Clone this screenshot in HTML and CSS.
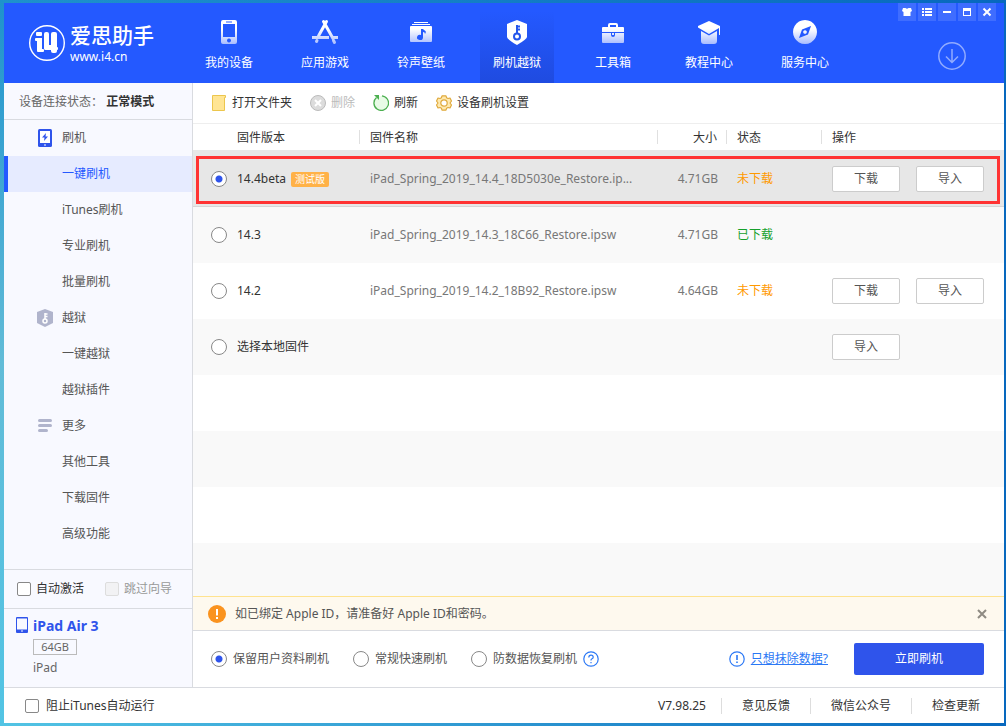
FILE: index.html
```
<!DOCTYPE html>
<html lang="zh-CN">
<head>
    <meta charset="UTF-8">
    <title>爱思助手</title>
    <link rel="stylesheet" href="styles.css">
</head>
<body>
<div class="window">
    <header class="header">
        <a class="logo" href="#">
            <svg class="logo-mark" width="38" height="38" viewBox="0 0 38 38">
                <circle cx="19" cy="19" r="17.3" fill="none" stroke="#fff" stroke-width="1.4"/>
                <g fill="#fff">
                    <rect x="8" y="8" width="6" height="4" rx="1"/>
                    <rect x="7" y="14" width="7" height="3" rx="1"/>
                    <rect x="9" y="14" width="5" height="13"/>
                    <rect x="9" y="25" width="7" height="3" rx="1"/>
                    <rect x="16" y="8" width="5" height="18" rx="2"/>
                    <rect x="16" y="21" width="9" height="5" rx="2"/>
                    <rect x="23" y="8" width="6" height="21" rx="2"/>
                    <rect x="23" y="23" width="7" height="3" rx="1"/>
                </g>
            </svg>
            <span class="logo-text"><strong>爱思助手</strong><small>www.i4.cn</small></span>
        </a>
        <nav class="topnav">
            <a href="#">
                <svg width="26" height="26" viewBox="0 0 26 26"><path fill="url(#fade)" fill-rule="evenodd" d="M7 1h12q2 0 2 2v20q0 2-2 2H7q-2 0-2-2V3q0-2 2-2zm0 4v13h12V5zm3-2.500v1h6v-1zm3 17a2 2 0 1 0 .01 0z"/></svg>
                我的设备
            </a>
            <a href="#">
                <svg width="26" height="26" viewBox="0 0 26 26" fill="none" stroke="url(#fade)" stroke-linecap="round"><path stroke-width="3" d="M11.500 2.500l9.500 17M14.500 2.500L6.500 17M5 21.500l-.5 1M21.500 21.500l1 2"/><path stroke-width="3" stroke-linecap="butt" d="M0 18.500h17M20 18.500h6"/></svg>
                应用游戏
            </a>
            <a href="#">
                <svg width="26" height="26" viewBox="0 0 26 26"><path fill="url(#fade)" fill-rule="evenodd" d="M6 3h14v1H6zM4 5h18v1H4zM3 7h20q1 0 1 1v14q0 1-1 1H3q-1 0-1-1V8q0-1 1-1zm10 3v6a3 2.600 0 1 0 2 2.500V13q2 0 2 2 2-3-1-4l-1-1z"/></svg>
                铃声壁纸
            </a>
            <a class="active" href="#">
                <svg width="26" height="26" viewBox="0 0 26 26"><path fill="#fff" d="M13 1l10 4v13q0 2-10 8Q3 20 3 18V5z"/><path fill="none" stroke="#2456ec" stroke-width="2" d="M13 6v9M13 7.500h3M13 10.500h3"/><circle cx="13" cy="17.500" r="3" fill="none" stroke="#2456ec" stroke-width="2"/></svg>
                刷机越狱
            </a>
            <a href="#">
                <svg width="26" height="26" viewBox="0 0 26 26"><path fill="url(#fade)" fill-rule="evenodd" d="M8 8V6q0-2 2-2h6q2 0 2 2v2h5q1 0 1 1v4H2V9q0-1 1-1zm2 0h6V6h-6zM2 14h9v2q0 2 2 2t2-2v-2h9v9q0 1-1 1H3q-1 0-1-1zm10 0h2v2h-2z"/></svg>
                工具箱
            </a>
            <a href="#">
                <svg width="26" height="26" viewBox="0 0 26 26"><path fill="url(#fade)" d="M13 2l11 5v9h-1V9l-10 6L2 8.500V7zM5 12l8 4.500 8-4.500v10q0 3-3 3H8q-3 0-3-3z"/></svg>
                教程中心
            </a>
            <a href="#">
                <svg width="26" height="26" viewBox="0 0 26 26"><path fill="url(#fade)" fill-rule="evenodd" d="M13 1a12 12 0 1 0 .01 0zM19 7l-3 8.500L7 19l3-8.500zm-6 4.200a1.800 1.800 0 1 0 .01 0z"/></svg>
                服务中心
            </a>
        </nav>
        <div class="controls">
            <button type="button" aria-label="皮肤"><svg width="18" height="18" viewBox="0 0 18 18"><path fill="#fff" d="M5 5h2.500q1.500 1.500 3 0H13l1 3-1.500 1v4h-7V9L4 8z"/></svg></button>
            <button type="button" aria-label="菜单"><svg width="18" height="18" viewBox="0 0 18 18"><path stroke="#fff" stroke-width="2" d="M4 6h2M7 6h7M4 9h2M7 9h7M4 12h2M7 12h7"/></svg></button>
            <button type="button" aria-label="最小化"><svg width="18" height="18" viewBox="0 0 18 18"><path stroke="#fff" stroke-width="2" d="M5 9h8"/></svg></button>
            <button type="button" aria-label="最大化"><svg width="18" height="18" viewBox="0 0 18 18"><path fill="#fff" fill-rule="evenodd" d="M5 5h8v8H5zm1 3v4h6V8z"/></svg></button>
            <button type="button" aria-label="关闭"><svg width="18" height="18" viewBox="0 0 18 18"><path stroke="#fff" stroke-width="2" d="M5.500 5.500l7 7M12.500 5.500l-7 7"/></svg></button>
        </div>
        <button class="downloads" type="button" aria-label="下载"><svg width="28" height="28" viewBox="0 0 28 28" fill="none" stroke="#91abff" stroke-width="1.500"><circle cx="14" cy="14" r="13.200"/><path d="M14 7v13M8 14.500l6 6 6-6"/></svg></button>
    </header>

    <div class="body">
        <aside class="sidebar">
            <p class="status">设备连接状态： <b>正常模式</b></p>
            <nav class="menu">
                <a class="group" href="#"><svg width="16" height="18" viewBox="0 0 16 18"><rect x="1" width="14" height="18" rx="1.500" fill="#2f54eb"/><path fill="#fff" d="M3 2h10v12H3zM7 15.500h2v1H7z"/><path fill="#2f54eb" d="M9 4L5 8.500h2.500L7 12l4-4.500H8.500z"/></svg>刷机</a>
                <a class="current" href="#">一键刷机</a>
                <a href="#">iTunes刷机</a>
                <a href="#">专业刷机</a>
                <a href="#">批量刷机</a>
                <a class="group" href="#"><svg width="16" height="18" viewBox="0 0 16 18"><path fill="#b0b4cc" d="M8 0l8 3v11l-8 4-8-4V3z"/><path fill="none" stroke="#fff" stroke-width="1.500" d="M8 4v6M8 5h2.500M8 7.500h2.500"/><circle cx="8" cy="12" r="2" fill="none" stroke="#fff" stroke-width="1.500"/></svg>越狱</a>
                <a href="#">一键越狱</a>
                <a href="#">越狱插件</a>
                <a class="group" href="#"><svg width="16" height="18" viewBox="0 0 16 18"><path stroke="#b0b4cc" stroke-width="3" stroke-linecap="round" d="M2.500 3.500h11M2.500 8.500h11M2.500 13.500h7"/></svg>更多</a>
                <a href="#">其他工具</a>
                <a href="#">下载固件</a>
                <a href="#">高级功能</a>
            </nav>
            <div class="activate">
                <label><input type="checkbox">自动激活</label>
                <label class="off"><input type="checkbox" disabled>跳过向导</label>
            </div>
            <div class="device">
                <svg width="12" height="16" viewBox="0 0 12 16"><path fill="#2f54eb" fill-rule="evenodd" d="M1 0h10q1 0 1 1v14q0 1-1 1H1q-1 0-1-1V1q0-1 1-1zm0 1.500v11h10v-11zM5 13.500v1h2v-1z"/></svg>
                <div class="device-info">
                    <h2>iPad Air 3</h2>
                    <span class="capacity">64GB</span>
                    <p>iPad</p>
                </div>
            </div>
        </aside>

        <main class="main">
            <div class="toolbar">
                <button type="button"><svg width="16" height="16" viewBox="0 0 16 16"><path fill="#ffe594" stroke="#ecc64d" d="M1.500.5h13v2h-1v13h-12z"/></svg>打开文件夹</button>
                <button type="button" disabled><svg width="16" height="16" viewBox="0 0 16 16"><circle cx="8" cy="8" r="7.500" fill="#dcdcdc" stroke="#bbb"/><path stroke="#fff" stroke-width="2" d="M5 5l6 6M11 5l-6 6"/></svg>删除</button>
                <button type="button"><svg width="16" height="16" viewBox="0 0 16 16"><path fill="#e8fbe6" stroke="#4caf50" stroke-width="1.300" d="M9 .8A7.300 7.300 0 1 1 3.500 2.500"/><path fill="#4caf50" d="M1 0h5v5z"/></svg>刷新</button>
                <button type="button"><svg width="16" height="16" viewBox="0 0 16 16" fill="#ffe9ae" stroke="#dfa93c" stroke-width="1.200" stroke-linejoin="round"><path d="M6 .8h4l.6 2 1.400.7 2-.5L15.500 6 14 8l1.500 2-1.500 3-2-.5-1.400.7-.6 2H6l-.6-2-1.400-.7-2 .5L.5 10 2 8 .5 6 2 3l2 .5 1.400-.7z"/><circle cx="8" cy="8" r="3.200" fill="#fff"/></svg>设备刷机设置</button>
            </div>

            <div class="firmware">
                <table>
                    <colgroup><col class="c-version"><col><col class="c-size"><col class="c-state"><col class="c-action"></colgroup>
                    <thead>
                        <tr><th class="version">固件版本</th><th>固件名称</th><th class="size">大小</th><th>状态</th><th>操作</th></tr>
                    </thead>
                    <tbody>
                        <tr class="selected">
                            <td><label><input type="radio" name="fw" checked>14.4beta<em>测试版</em></label></td>
                            <td class="name">iPad_Spring_2019_14.4_18D5030e_Restore.ip...</td>
                            <td class="size">4.71GB</td>
                            <td class="wait">未下载</td>
                            <td><div class="actions"><button type="button">下载</button><button type="button">导入</button></div></td>
                        </tr>
                        <tr>
                            <td><label><input type="radio" name="fw">14.3</label></td>
                            <td class="name">iPad_Spring_2019_14.3_18C66_Restore.ipsw</td>
                            <td class="size">4.71GB</td>
                            <td class="done">已下载</td>
                            <td></td>
                        </tr>
                        <tr>
                            <td><label><input type="radio" name="fw">14.2</label></td>
                            <td class="name">iPad_Spring_2019_14.2_18B92_Restore.ipsw</td>
                            <td class="size">4.64GB</td>
                            <td class="wait">未下载</td>
                            <td><div class="actions"><button type="button">下载</button><button type="button">导入</button></div></td>
                        </tr>
                        <tr>
                            <td><label><input type="radio" name="fw">选择本地固件</label></td>
                            <td></td>
                            <td></td>
                            <td></td>
                            <td><div class="actions"><button type="button">导入</button></div></td>
                        </tr>
                    </tbody>
                </table>
                <div class="blank"></div>
            </div>

            <div class="notice">
                <svg width="18" height="18" viewBox="0 0 18 18"><circle cx="9" cy="9" r="9" fill="#fa931e"/><path stroke="#fff" stroke-width="2" d="M9 4v6.500M9 12v2"/></svg>
                <span>如已绑定 Apple ID，请准备好 Apple ID和密码。</span>
                <button type="button" aria-label="关闭提示"><svg width="10" height="10" viewBox="0 0 10 10"><path stroke="#8f8b82" stroke-width="2" d="M1 1l8 8M9 1L1 9"/></svg></button>
            </div>

            <div class="options">
                <label><input type="radio" name="mode" checked>保留用户资料刷机</label>
                <label><input type="radio" name="mode">常规快速刷机</label>
                <label><input type="radio" name="mode">防数据恢复刷机</label>
                <svg class="help" width="16" height="16" viewBox="0 0 16 16" fill="none" stroke="#2b78f5" stroke-width="1.200"><circle cx="8" cy="8" r="7.200"/><path d="M5.800 6.500q0-2.300 2.200-2.300t2.200 2q0 1-1.200 1.600t-1 1.700M8 11v1.300"/></svg>
                <a class="erase" href="#"><svg width="16" height="16" viewBox="0 0 16 16" fill="none" stroke="#2b78f5" stroke-width="1.200"><circle cx="8" cy="8" r="7.200"/><path stroke-width="1.600" d="M8 4v5M8 10.500V12"/></svg><span>只想抹除数据?</span></a>
                <button class="flash" type="button">立即刷机</button>
            </div>
        </main>
    </div>

    <footer class="footer">
        <label><input type="checkbox">阻止iTunes自动运行</label>
        <span class="ver">V7.98.25</span>
        <a href="#">意见反馈</a>
        <a href="#">微信公众号</a>
        <a href="#">检查更新</a>
    </footer>
</div>

<!-- shared white fade for the top icons -->
<svg class="defs" width="0" height="0">
    <linearGradient id="fade" gradientUnits="userSpaceOnUse" x1="0" y1="10" x2="0" y2="26"><stop offset="0" stop-color="#fff"/><stop offset="1" stop-color="#a3b8ff"/></linearGradient>
</svg>
</body>
</html>
```
FILE: styles.css
```
* { box-sizing:border-box; }
body{ margin:0; height:100vh; padding:3px 2px 3px 4px; font:12px/18px "Noto Sans","Noto Sans CJK SC",sans-serif; color:#333; background:linear-gradient(to right,rgba(7,104,190,0),#0768be),linear-gradient(#1e92cc,#62bcd8 50%,#52c4e4); }
a{ color:inherit; text-decoration:none; }
p,h2{ margin:0; }
button{ margin:0; padding:0; border:0; background:none; font:inherit; color:inherit; cursor:pointer; }
svg{ display:block; flex:none; }
label{ display:flex; align-items:center; }
.defs{ position:absolute; }
.window{ height:100%; display:flex; flex-direction:column; background:#fff; }

input[type=radio],input[type=checkbox]{ appearance:none; flex:none; margin:0; border:1px solid #888; background:#fff; }
input[type=radio]{ width:16px; height:16px; border-radius:50%; margin-right:10px; }
input[type=radio]:checked{ background:radial-gradient(circle,#2f54eb 3px,#fff 4px); }
input[type=checkbox]{ width:14px; height:14px; border-radius:2px; margin-right:5px; }
input[type=checkbox]:disabled{ border-color:#ddd; background:#f2f2f4; }

/* header */
.header{ position:relative; flex:none; display:flex; height:80px; background:#2459ff; color:#fff; }
.logo{ display:flex; align-items:center; width:188px; padding-left:24px; gap:4px; }
.logo-text strong{ display:block; font-size:21px; line-height:28px; font-weight:500; }
.logo-text small{ display:block; font-size:12px; line-height:16px; }
.topnav{ display:flex; gap:22px; }
.topnav a{ width:74px; padding-top:16px; display:flex; flex-direction:column; align-items:center; gap:9px; }
.topnav .active{ background:linear-gradient(#2459ff 10%,#1f4be0); }
.controls{ position:absolute; top:0; right:8px; display:flex; gap:2px; }
.controls button{ background:#3f6dff; }
.downloads{ margin:26px 38px 0 auto; }

.body{ flex:1; min-height:0; display:flex; }

/* sidebar */
.sidebar{ flex:none; width:189px; display:flex; flex-direction:column; background:#f8f9ff; border-right:1px solid #d9dbe0; }
.status{ height:37px; line-height:38px; padding-left:15px; border-bottom:1px solid #d9dbe0; color:#666; }
.status b{ color:#333; }
.menu{ flex:1; }
.menu a{ display:flex; align-items:center; height:36px; padding-left:58px; color:#555; }
.menu .group{ padding-left:33px; gap:9px; }
.menu .current{ background:#e6ebff; color:#2459ff; border-left:4px solid #2459ff; padding-left:54px; }
.activate{ display:flex; align-items:center; gap:21px; height:39px; padding-left:13px; border-top:1px solid #d9dbe0; }
.activate .off{ color:#999; }
.device{ display:flex; gap:5px; height:79px; padding:8px 12px; border-top:1px solid #d9dbe0; color:#666; }
.device h2{ font-size:14px; line-height:18px; color:#2f54eb; }
.capacity{ display:block; width:44px; height:16px; margin:4px 0; border:1px solid #bbb; line-height:14px; text-align:center; font-size:11px; }

/* firmware list */
.main{ flex:1; min-width:0; display:flex; flex-direction:column; }
.toolbar{ flex:none; display:flex; align-items:center; gap:18px; height:41px; padding-left:18px; border-bottom:1px solid #eee; }
.toolbar button{ display:flex; align-items:center; gap:5px; }
.toolbar button:disabled{ color:#bbb; }
.firmware{ flex:1; min-height:0; overflow:hidden; display:flex; flex-direction:column; }
table{ width:100%; border-spacing:0; table-layout:fixed; }
.c-version{ width:167px; }
.c-size{ width:69px; }
.c-state{ width:95px; }
.c-action{ width:182px; }
th{ height:26px; padding:2px 0 0 10px; font-weight:400; text-align:left; background:linear-gradient(#e0e0e0,#e0e0e0) right 6px/1px 14px no-repeat; }
th:last-child{ background:none; }
th.version{ padding-left:44px; }
th.size{ text-align:right; padding:2px 10px 0 0; }
td{ height:56px; padding:0 0 0 10px; }
td:first-child{ padding-left:18px; }
td.name,td.size{ color:#777; }
td.name{ white-space:nowrap; }
td.size{ text-align:right; padding:0 9px 0 0; }
tbody tr{ position:relative; }
tbody tr:nth-child(even){ background:#f9f9f9; }
.selected{ background:#e7e7e7; }
tr.selected td{ height:57px; padding-top:2px; border-bottom:1px solid #d6d6d6; }
.selected td:last-child::after{ content:""; position:absolute; top:6px; right:4px; bottom:3px; left:3px; border:3px solid #ff3333; pointer-events:none; }
td em{ margin-left:5px; padding:0 4px; border-radius:2px; background:#ffb248; color:#fff; font-size:10px; line-height:15px; font-style:normal; }
.wait{ color:#f90; }
.done{ color:#16a02c; }
.actions{ display:flex; gap:16px; }
.actions button{ width:68px; height:26px; border:1px solid #ccc; border-radius:2px; background:#fff; color:#555; }
.blank{ flex:1; background:repeating-linear-gradient(#fff 0,#fff 56px,#f9f9f9 56px,#f9f9f9 112px); }

.notice{ flex:none; display:flex; align-items:center; gap:9px; height:35px; padding:0 17px 0 15px; border-top:1px solid #ffe38f; border-bottom:1px solid #d9dbe0; background:#fef9ee; color:#555; }
.notice button{ margin-left:auto; }
.options{ flex:none; display:flex; align-items:center; height:56px; padding:0 20px 0 18px; color:#555; }
.options label{ margin-right:24px; }
.options input[type=radio]{ margin-right:6px; }
.help{ margin-left:-18px; }
.erase{ display:flex; align-items:center; gap:6px; margin-left:auto; color:#2b78f5; }
.erase span{ text-decoration:underline; }
.flash{ width:130px; height:32px; margin-left:26px; border-radius:2px; background:#2f54eb; color:#fff; }

.footer{ flex:none; display:flex; align-items:center; height:36px; padding:0 4px 0 21px; border-top:1px solid #d9dbe0; }
.footer label{ margin-right:auto; }
.footer input{ margin-right:7px; }
.ver{ padding-right:15px; }
.footer a{ padding:0 20px; border-left:1px solid #ddd; line-height:16px; }
```
